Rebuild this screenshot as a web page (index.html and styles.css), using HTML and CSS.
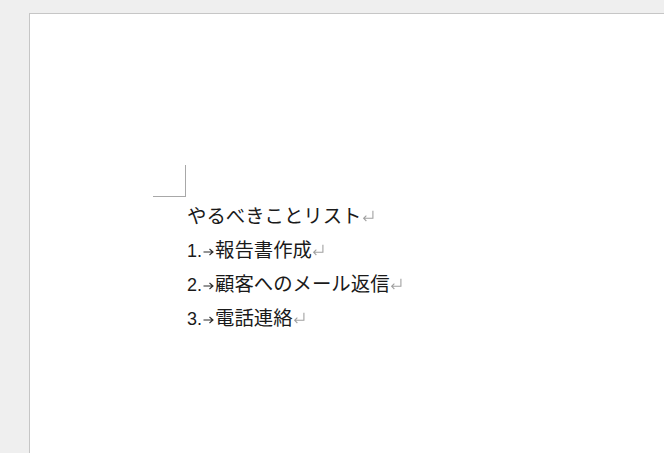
FILE: index.html
```html
<!DOCTYPE html>
<html lang="ja">
<head>
    <meta charset="UTF-8">
    <title>やるべきことリスト</title>
    <link rel="stylesheet" href="styles.css">
</head>
<body>
    <div class="workspace">
        <div class="page">
            <div class="margin-mark"></div>
            <div class="doc-body">
                <p class="line">やるべきことリスト<svg class="para" viewBox="0 0 11 9"><path d="M10 0.5V7.5H1.5M4 5L1.5 7.5L4 10" /></svg></p>
                <p class="line"><span class="num">1.</span><svg class="tab" viewBox="0 0 11 8"><path d="M0.5 4H10M6.5 1L10 4L6.5 7" /></svg>報告書作成<svg class="para" viewBox="0 0 11 9"><path d="M10 0.5V7.5H1.5M4 5L1.5 7.5L4 10" /></svg></p>
                <p class="line"><span class="num">2.</span><svg class="tab" viewBox="0 0 11 8"><path d="M0.5 4H10M6.5 1L10 4L6.5 7" /></svg>顧客へのメール返信<svg class="para" viewBox="0 0 11 9"><path d="M10 0.5V7.5H1.5M4 5L1.5 7.5L4 10" /></svg></p>
                <p class="line"><span class="num">3.</span><svg class="tab" viewBox="0 0 11 8"><path d="M0.5 4H10M6.5 1L10 4L6.5 7" /></svg>電話連絡<svg class="para" viewBox="0 0 11 9"><path d="M10 0.5V7.5H1.5M4 5L1.5 7.5L4 10" /></svg></p>
            </div>
        </div>
    </div>
</body>
</html>
```

FILE: styles.css
```css
* {
    margin: 0;
    padding: 0;
    box-sizing: border-box;
}

body {
    background-color: #efefef;
    overflow: hidden;
    font-family: 'Noto Sans CJK JP', sans-serif;
}

.workspace {
    height: 453px;
    padding: 13px 0 0 29px;
}

.page {
    background-color: #ffffff;
    border-top: 1px solid #c6c6c6;
    border-left: 1px solid #c6c6c6;
    height: 440px;
    padding: 151px 0 0 157px;
}

/* corner mark of the text area */
.margin-mark {
    width: 33px;
    height: 32px;
    margin-left: -34px;
    border-right: 1px solid #a8a8a8;
    border-bottom: 1px solid #a8a8a8;
}

.doc-body {
    padding-top: 1px;
}

.line {
    height: 34px;
    font-size: 19.4px;
    line-height: 34px;
    color: #1a1a1a;
    white-space: nowrap;
}

.num {
    font-family: 'Liberation Sans', sans-serif;
    font-size: 18px;
}

.tab {
    width: 11px;
    height: 8px;
    margin: 0 1px 0 1px;
    vertical-align: 1px;
    overflow: visible;
}

.tab path {
    fill: none;
    stroke: #2a2a2a;
    stroke-width: 1.1;
}

.para {
    width: 12px;
    height: 10px;
    margin-left: 0;
    vertical-align: 3px;
    overflow: visible;
}

.para path {
    fill: none;
    stroke: #a0a0a0;
    stroke-width: 1;
}
```
